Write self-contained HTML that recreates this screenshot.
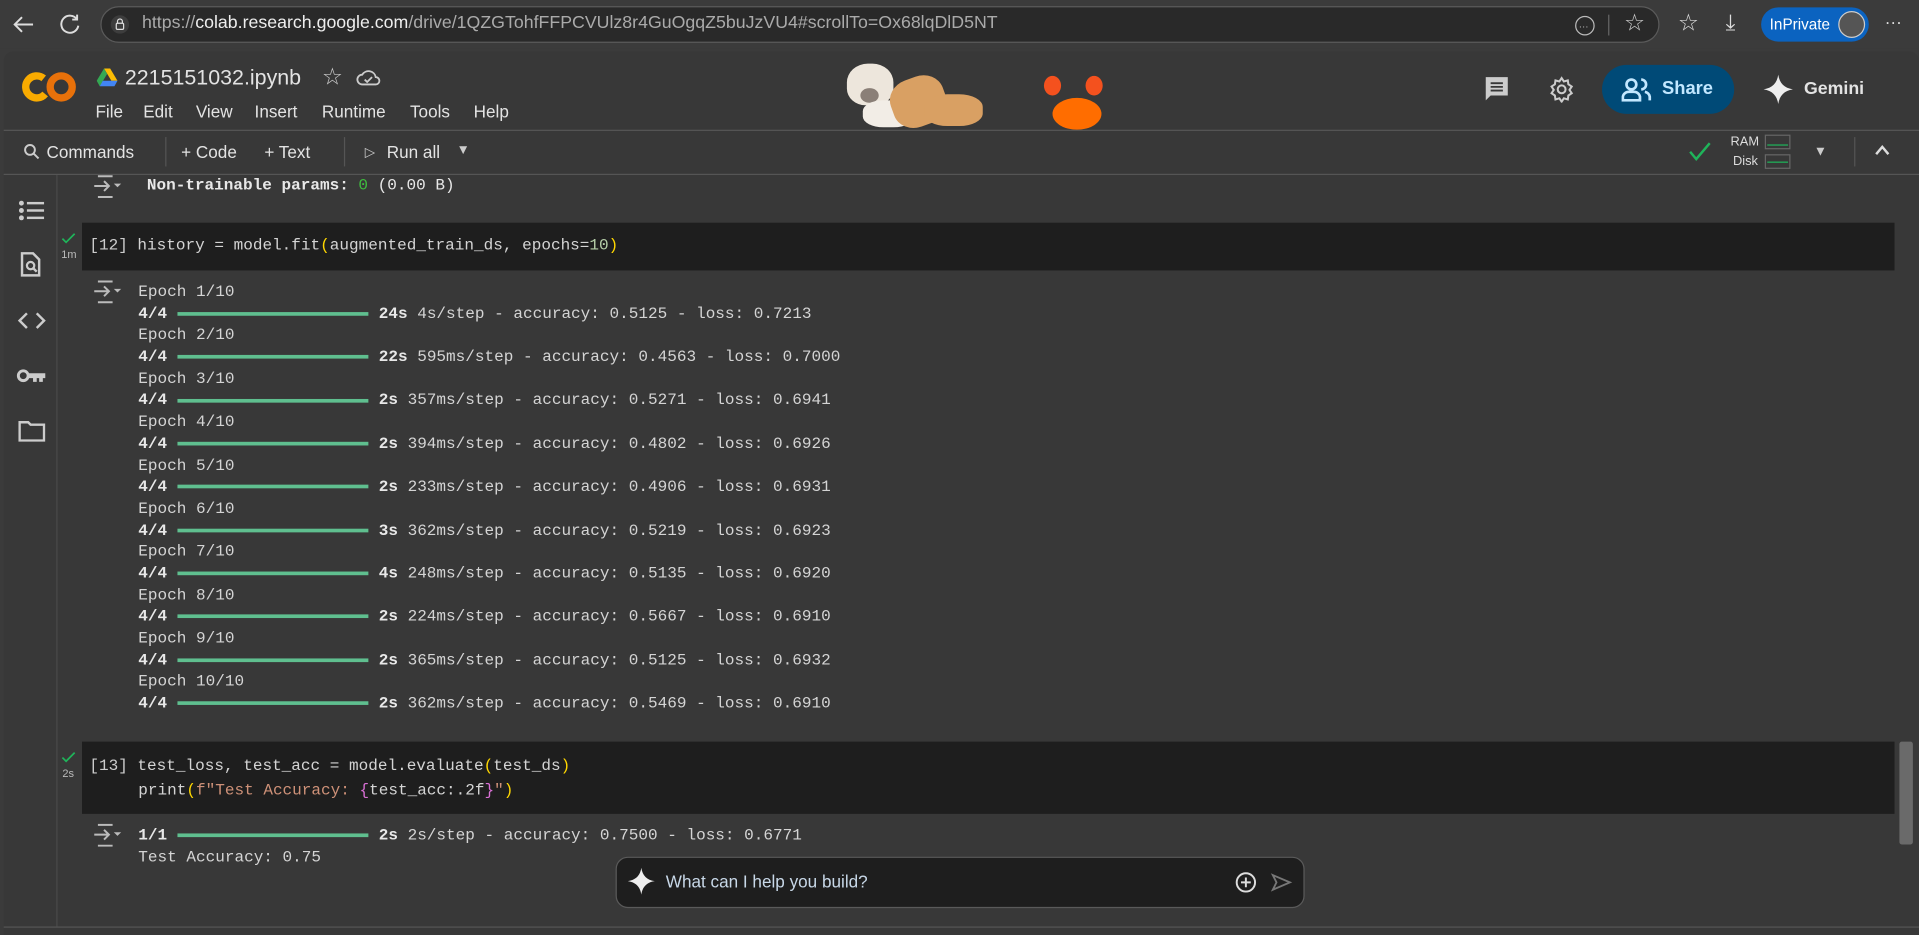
<!DOCTYPE html>
<html><head><meta charset="utf-8"><style>
html,body{margin:0;padding:0;width:1919px;height:935px;overflow:hidden;background:#383838;}
#w{position:absolute;left:0;top:0;width:1568px;height:764px;transform:scale(1.22385);transform-origin:0 0;background:#3b3b3b;font-family:"Liberation Sans",sans-serif;color:#e3e3e3;}
.a{position:absolute;white-space:pre;}
.m{font-family:"Liberation Mono",monospace;font-size:13.1px;color:#d4d4d4;}
.b{font-weight:bold;color:#e8e8e8;}
.bar{position:absolute;left:145px;width:156px;height:3px;background:#5fbf8f;}
.mn{font-size:14px;color:#e3e3e3;}
svg{position:absolute;}
</style></head><body><div id="w">
<div class="a" style="left:0;top:0;width:1568px;height:40px;background:#3b3b3b"></div>
<svg style="left:8px;top:9px" width="22" height="22" viewBox="0 0 22 22"><path d="M19 11H4M10 5l-6 6 6 6" stroke="#ddd" stroke-width="1.6" fill="none"/></svg>
<svg style="left:46px;top:9px" width="22" height="22" viewBox="0 0 22 22"><path d="M17 7a7 7 0 1 0 1 5M17 3v4h-4" stroke="#ddd" stroke-width="1.6" fill="none"/></svg>
<div class="a" style="left:82px;top:5px;width:1274px;height:30px;border:1px solid #5a5a5a;border-radius:16px;background:#292929;box-sizing:border-box"></div>
<svg style="left:90px;top:12px" width="16" height="16" viewBox="0 0 16 16"><circle cx="8" cy="8" r="7.5" fill="#3d3d3d"/><rect x="5" y="7" width="6" height="5" rx="1" stroke="#ddd" fill="none"/><path d="M6 7V5.5a2 2 0 0 1 4 0V7" stroke="#ddd" fill="none"/></svg>
<div class="a" style="left:116px;top:11px;font-size:14.5px;color:#aaa">https://<span style="color:#eee">colab.research.google.com</span>/drive/1QZGTohfFFPCVUlz8r4GuOgqZ5buJzVU4#scrollTo=Ox68lqDlD5NT</div>
<svg style="left:1286px;top:12px" width="18" height="18"><circle cx="9" cy="9" r="7.5" stroke="#bbb" fill="none"/><text x="4" y="12" font-size="8" fill="#bbb">···</text></svg>
<div class="a" style="left:1314px;top:12px;width:1px;height:17px;background:#666"></div>
<div class="a" style="left:1327px;top:8px;font-size:19px;color:#ccc">☆</div>
<div class="a" style="left:1371px;top:8px;font-size:19px;color:#ddd">☆</div>
<div class="a" style="left:1410px;top:8px;font-size:18px;color:#ddd">⤓</div>
<div class="a" style="left:1439px;top:6px;width:88px;height:28px;border-radius:14px;background:#0b63c0"></div>
<div class="a" style="left:1446px;top:13px;font-size:12.5px;color:#fff">InPrivate</div>
<div class="a" style="left:1502px;top:9px;width:22px;height:22px;border-radius:11px;background:#555;border:1px solid #ccc;box-sizing:border-box"></div>
<div class="a" style="left:1540px;top:10px;font-size:14px;color:#ddd">···</div>
<div class="a" style="left:3px;top:42px;width:1565px;height:722px;background:#383838;border-radius:8px 8px 0 0"></div>
<svg style="left:18px;top:56px" width="46" height="30" viewBox="0 0 46 30"><circle cx="12" cy="15" r="9" stroke="#f9ab00" stroke-width="6" fill="none" stroke-dasharray="42 15" transform="rotate(40 12 15)"/><circle cx="32" cy="15" r="9" stroke="#e8710a" stroke-width="6" fill="none"/></svg>
<svg style="left:79px;top:56px" width="17" height="15" viewBox="0 0 17 15"><path d="M6 0h5l6 10h-5z" fill="#fbbc04"/><path d="M6 0L0 10l2.5 4.5 6-10z" fill="#34a853"/><path d="M2.5 14.5h12L17 10H5z" fill="#4285f4"/></svg>
<div class="a" style="left:102px;top:53px;font-size:17.5px;color:#e3e3e3">2215151032.ipynb</div>
<div class="a" style="left:263px;top:52px;font-size:19px;color:#ccc">☆</div>
<svg style="left:291px;top:55px" width="20" height="16" viewBox="0 0 20 16"><path d="M5 14a4 4 0 0 1 0-8 6 6 0 0 1 11 2 3 3 0 0 1 0 6z" stroke="#ccc" stroke-width="1.5" fill="none"/><path d="M7 10l2 2 4-4" stroke="#ccc" stroke-width="1.5" fill="none"/></svg>
<div class="a mn" style="left:78px;top:83px">File</div>
<div class="a mn" style="left:117px;top:83px">Edit</div>
<div class="a mn" style="left:160px;top:83px">View</div>
<div class="a mn" style="left:208px;top:83px">Insert</div>
<div class="a mn" style="left:263px;top:83px">Runtime</div>
<div class="a mn" style="left:335px;top:83px">Tools</div>
<div class="a mn" style="left:387px;top:83px">Help</div>
<div class="a" style="left:692px;top:52px;width:38px;height:34px;border-radius:45% 45% 40% 40%;background:#ede6dc"></div>
<div class="a" style="left:703px;top:72px;width:15px;height:12px;border-radius:50%;background:#8a7f77"></div>
<div class="a" style="left:705px;top:82px;width:42px;height:22px;border-radius:40%;background:#f2ede6"></div>
<div class="a" style="left:728px;top:63px;width:45px;height:40px;border-radius:40%;background:#d9a063;transform:rotate(-20deg)"></div>
<div class="a" style="left:755px;top:77px;width:48px;height:26px;border-radius:40%;background:#d9a063"></div>
<div class="a" style="left:860px;top:80px;width:40px;height:26px;border-radius:50%;background:#ff6d00"></div>
<div class="a" style="left:853px;top:62px;width:14px;height:16px;border-radius:50%;background:#f4511e"></div>
<div class="a" style="left:887px;top:62px;width:14px;height:16px;border-radius:50%;background:#f4511e"></div>
<svg style="left:1212px;top:61px" width="22" height="22" viewBox="0 0 22 22"><path d="M2 2h18v15H6l-4 4z" fill="#ccc"/><path d="M6 7h10M6 10h10M6 13h10" stroke="#383838" stroke-width="1.5"/></svg>
<svg style="left:1265px;top:62px" width="22" height="22" viewBox="0 0 24 24"><path d="M12 2l2 3 3.5-1 .5 3.5 3 2-2 3 2 3-3 2-.5 3.5L14 20l-2 3-2-3-3.5 1-.5-3.5-3-2 2-3-2-3 3-2 .5-3.5L10 5z" stroke="#ccc" stroke-width="1.8" fill="none"/><circle cx="12" cy="12" r="3.5" stroke="#ccc" stroke-width="1.8" fill="none"/></svg>
<div class="a" style="left:1309px;top:53px;width:108px;height:40px;border-radius:20px;background:#004a77"></div>
<svg style="left:1325px;top:63px" width="26" height="20" viewBox="0 0 26 20"><circle cx="8" cy="6" r="4" stroke="#c2e7ff" stroke-width="2.2" fill="none"/><path d="M1 19v-3a5 5 0 0 1 5-4h4a5 5 0 0 1 5 4v3z" stroke="#c2e7ff" stroke-width="2.2" fill="none"/><path d="M16 2a4 4 0 0 1 0 8M19 12a5 5 0 0 1 4 4v3" stroke="#c2e7ff" stroke-width="2.2" fill="none"/></svg>
<div class="a" style="left:1358px;top:64px;font-size:15px;font-weight:bold;color:#c2e7ff">Share</div>
<svg style="left:1441px;top:61px" width="24" height="24" viewBox="0 0 24 24"><path d="M12 0C13 7 17 11 24 12 17 13 13 17 12 24 11 17 7 13 0 12 7 11 11 7 12 0z" fill="#eee"/></svg>
<div class="a" style="left:1474px;top:65px;font-size:14.5px;font-weight:bold;color:#e3e3e3">Gemini</div>
<div class="a" style="left:3px;top:106px;width:1565px;height:1px;background:#555"></div>
<svg style="left:19px;top:117px" width="14" height="14" viewBox="0 0 14 14"><circle cx="5.5" cy="5.5" r="4" stroke="#ccc" stroke-width="1.6" fill="none"/><path d="M8.5 8.5l4 4" stroke="#ccc" stroke-width="1.6"/></svg>
<div class="a mn" style="left:38px;top:116px">Commands</div>
<div class="a" style="left:135px;top:112px;width:1px;height:24px;background:#555"></div>
<div class="a mn" style="left:148px;top:116px">+ Code</div>
<div class="a mn" style="left:216px;top:116px">+ Text</div>
<div class="a" style="left:281px;top:112px;width:1px;height:24px;background:#555"></div>
<div class="a" style="left:298px;top:118px;font-size:11px;color:#ccc">▷</div>
<div class="a mn" style="left:316px;top:116px">Run all</div>
<div class="a" style="left:373px;top:117px;font-size:11px;color:#ccc">▼</div>
<svg style="left:1380px;top:116px" width="18" height="16"><path d="M1 8l5 6L17 1" stroke="#1fb45a" stroke-width="2" fill="none"/></svg>
<div class="a" style="left:1414px;top:110px;font-size:10.5px;color:#ddd">RAM</div>
<div class="a" style="left:1416px;top:126px;font-size:10.5px;color:#ddd">Disk</div>
<div class="a" style="left:1442px;top:110px;width:21px;height:12px;border:1px solid #666;box-sizing:border-box"><div style="position:absolute;left:1px;right:1px;bottom:2px;height:1px;background:#1fb45a"></div></div>
<div class="a" style="left:1442px;top:126px;width:21px;height:12px;border:1px solid #666;box-sizing:border-box"><div style="position:absolute;left:1px;right:1px;bottom:4px;height:1px;background:#1fb45a"></div></div>
<div class="a" style="left:1482px;top:118px;font-size:11px;color:#ccc">▼</div>
<div class="a" style="left:1515px;top:112px;width:1px;height:24px;background:#555"></div>
<svg style="left:1532px;top:118px" width="12" height="10"><path d="M1 8l5-6 5 6" stroke="#ddd" stroke-width="2" fill="none"/></svg>
<div class="a" style="left:3px;top:142px;width:1565px;height:1px;background:#555"></div>
<div class="a" style="left:46px;top:143px;width:1px;height:614px;background:#4a4a4a"></div>
<svg style="left:15px;top:163px" width="22" height="18"><g fill="#ccc"><circle cx="2.5" cy="3" r="2"/><circle cx="2.5" cy="9" r="2"/><circle cx="2.5" cy="15" r="2"/><rect x="7" y="2" width="14" height="2"/><rect x="7" y="8" width="14" height="2"/><rect x="7" y="14" width="14" height="2"/></g></svg>
<svg style="left:16px;top:205px" width="18" height="22"><path d="M2 2h9l5 5v13H2z" stroke="#ccc" stroke-width="2" fill="none"/><circle cx="9" cy="12" r="3" stroke="#ccc" stroke-width="1.8" fill="none"/><path d="M11 14l3 3" stroke="#ccc" stroke-width="2"/></svg>
<svg style="left:14px;top:254px" width="24" height="16"><path d="M8 2L2 8l6 6M16 2l6 6-6 6" stroke="#ccc" stroke-width="2" fill="none"/></svg>
<svg style="left:13px;top:299px" width="26" height="16"><circle cx="6" cy="8" r="4" stroke="#ccc" stroke-width="2.4" fill="none"/><path d="M10 6h14v4h-2v3h-3v-3h-2v3h-3v-3h-4z" fill="#ccc"/></svg>
<svg style="left:15px;top:343px" width="22" height="18"><path d="M1 2h7l2 2h11v13H1z" stroke="#ccc" stroke-width="2" fill="none"/></svg>
<svg style="left:76px;top:143px" width="26" height="19"><path d="M4 1h12M4 18h12M1 9h12M9 5l4 4-4 4" stroke="#bbb" stroke-width="1.6" fill="none"/><path d="M17 7l3 3 3-3z" fill="#bbb"/></svg>
<div class="a m b" style="left:120px;top:144px">Non-trainable params: <span style="color:#3fbc3f;font-weight:normal">0</span><span style="font-weight:normal"> (0.00 B)</span></div>
<div class="a" style="left:67px;top:182px;width:1481px;height:39px;background:#1e1e1e"></div>
<svg style="left:50px;top:190px" width="12" height="10"><path d="M1 5l3 3 7-7" stroke="#1fb45a" stroke-width="1.4" fill="none"/></svg>
<div class="a" style="left:50px;top:203px;font-size:9px;color:#bbb">1m</div>
<div class="a m" style="left:73px;top:193px;color:#ccc">[12] <span style="color:#d4d4d4">history = model.fit<span style="color:#ffd700">(</span>augmented_train_ds, epochs=<span style="color:#b5cea8">10</span><span style="color:#ffd700">)</span></span></div>
<svg style="left:76px;top:229px" width="26" height="19"><path d="M4 1h12M4 18h12M1 9h12M9 5l4 4-4 4" stroke="#bbb" stroke-width="1.6" fill="none"/><path d="M17 7l3 3 3-3z" fill="#bbb"/></svg>
<div class="a m" style="left:113px;top:230px;line-height:17.68px">Epoch 1/10
<b class="b">4/4</b>                      <b class="b">24s</b> 4s/step - accuracy: 0.5125 - loss: 0.7213
Epoch 2/10
<b class="b">4/4</b>                      <b class="b">22s</b> 595ms/step - accuracy: 0.4563 - loss: 0.7000
Epoch 3/10
<b class="b">4/4</b>                      <b class="b">2s</b> 357ms/step - accuracy: 0.5271 - loss: 0.6941
Epoch 4/10
<b class="b">4/4</b>                      <b class="b">2s</b> 394ms/step - accuracy: 0.4802 - loss: 0.6926
Epoch 5/10
<b class="b">4/4</b>                      <b class="b">2s</b> 233ms/step - accuracy: 0.4906 - loss: 0.6931
Epoch 6/10
<b class="b">4/4</b>                      <b class="b">3s</b> 362ms/step - accuracy: 0.5219 - loss: 0.6923
Epoch 7/10
<b class="b">4/4</b>                      <b class="b">4s</b> 248ms/step - accuracy: 0.5135 - loss: 0.6920
Epoch 8/10
<b class="b">4/4</b>                      <b class="b">2s</b> 224ms/step - accuracy: 0.5667 - loss: 0.6910
Epoch 9/10
<b class="b">4/4</b>                      <b class="b">2s</b> 365ms/step - accuracy: 0.5125 - loss: 0.6932
Epoch 10/10
<b class="b">4/4</b>                      <b class="b">2s</b> 362ms/step - accuracy: 0.5469 - loss: 0.6910</div>
<div class="bar" style="top:255px"></div><div class="bar" style="top:290px"></div><div class="bar" style="top:326px"></div><div class="bar" style="top:361px"></div><div class="bar" style="top:396px"></div><div class="bar" style="top:432px"></div><div class="bar" style="top:467px"></div><div class="bar" style="top:502px"></div><div class="bar" style="top:538px"></div><div class="bar" style="top:573px"></div>
<div class="a" style="left:67px;top:606px;width:1481px;height:59px;background:#1e1e1e"></div>
<div class="a" style="left:1552px;top:606px;width:11px;height:84px;background:#6a6a6a;border-radius:2px"></div>
<svg style="left:50px;top:614px" width="12" height="10"><path d="M1 5l3 3 7-7" stroke="#1fb45a" stroke-width="1.4" fill="none"/></svg>
<div class="a" style="left:51px;top:627px;font-size:9px;color:#bbb">2s</div>
<div class="a m" style="left:73px;top:618px;color:#ccc">[13] <span style="color:#d4d4d4">test_loss, test_acc = model.evaluate<span style="color:#ffd700">(</span>test_ds<span style="color:#ffd700">)</span></span></div>
<div class="a m" style="left:113px;top:638px">print<span style="color:#ffd700">(</span><span style="color:#ce9178">f"Test Accuracy: </span><span style="color:#da70d6">{</span>test_acc:.2f<span style="color:#da70d6">}</span><span style="color:#ce9178">"</span><span style="color:#ffd700">)</span></div>
<svg style="left:76px;top:673px" width="26" height="19"><path d="M4 1h12M4 18h12M1 9h12M9 5l4 4-4 4" stroke="#bbb" stroke-width="1.6" fill="none"/><path d="M17 7l3 3 3-3z" fill="#bbb"/></svg>
<div class="a m" style="left:113px;top:674px;line-height:17.68px"><b class="b">1/1</b>                      <b class="b">2s</b> 2s/step - accuracy: 0.7500 - loss: 0.6771
Test Accuracy: 0.75</div>
<div class="bar" style="top:681px"></div>
<div class="a" style="left:503px;top:700px;width:563px;height:42px;border-radius:10px;background:#1e1e1e;border:1px solid #5a5a5a;box-sizing:border-box"></div>
<svg style="left:513px;top:709px" width="22" height="22" viewBox="0 0 24 24"><path d="M12 0C13 7 17 11 24 12 17 13 13 17 12 24 11 17 7 13 0 12 7 11 11 7 12 0z" fill="#eee"/></svg>
<div class="a" style="left:544px;top:712px;font-size:14px;color:#c8d8e8">What can I help you build?</div>
<svg style="left:1009px;top:712px" width="18" height="18"><circle cx="9" cy="9" r="7.5" stroke="#ddd" stroke-width="1.6" fill="none"/><path d="M9 5v8M5 9h8" stroke="#ddd" stroke-width="1.6"/></svg>
<svg style="left:1038px;top:713px" width="18" height="16"><path d="M2 2l14 6-14 6 3-6z" stroke="#777" stroke-width="1.5" fill="none"/></svg>
<div class="a" style="left:3px;top:757px;width:1565px;height:1px;background:#555"></div>
</div></body></html>
